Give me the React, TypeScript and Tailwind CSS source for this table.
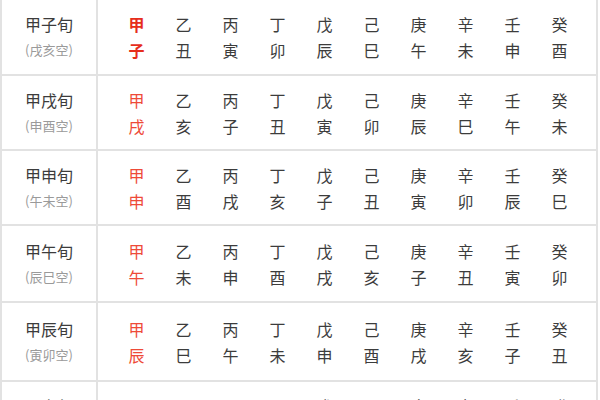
const stems = ["甲", "乙", "丙", "丁", "戊", "己", "庚", "辛", "壬", "癸"]
const branches = ["子", "丑", "寅", "卯", "辰", "巳", "午", "未", "申", "酉", "戌", "亥"]

const xun = [
  { name: "甲子旬", empty: "(戌亥空)", start: 0, h: "h-[76px]" },
  { name: "甲戌旬", empty: "(申酉空)", start: 10, h: "h-[75px]" },
  { name: "甲申旬", empty: "(午未空)", start: 8, h: "h-[75px]" },
  { name: "甲午旬", empty: "(辰巳空)", start: 6, h: "h-[77px]" },
  { name: "甲辰旬", empty: "(寅卯空)", start: 4, h: "h-[79px]" },
  { name: "甲寅旬", empty: "(子丑空)", start: 2, h: "h-[76px]" },
]

export default function App() {
  return (
    <div
      className="w-[600px] h-[400px] overflow-hidden bg-white"
      style={{ fontFamily: '"Noto Sans CJK SC", "Noto Sans", sans-serif' }}
    >
      <div className="w-[598px] border-l-2 border-r-2 border-[#e2e2e2]">
        {xun.map((row, i) => (
          <div key={row.name} className={`flex border-b-2 border-[#e2e2e2] ${row.h}`}>
            {/* 旬名 */}
            <div className="w-[96px] shrink-0 border-r-2 border-[#e2e2e2] flex flex-col items-center justify-center">
              <div className="text-[16px] leading-[26px] text-[#3c3c3c]">{row.name}</div>
              <div className="text-[13px] leading-[26px] text-[#9a9a9a]">{row.empty}</div>
            </div>
            {/* 干支 */}
            <div className="flex-1 grid grid-cols-[repeat(10,47px)] pl-[15px] content-center">
              {stems.map((s, j) => {
                const b = branches[(row.start + j) % 12]
                const red = j === 0
                const color = red ? (i === 0 ? "text-[#e62e1c] font-bold" : "text-[#ee4a38]") : "text-[#3c3c3c]"
                return (
                  <div key={s} className={`flex flex-col items-center text-[16px] leading-[26px] ${color}`}>
                    <span>{s}</span>
                    <span>{b}</span>
                  </div>
                )
              })}
            </div>
          </div>
        ))}
      </div>
    </div>
  )
}
